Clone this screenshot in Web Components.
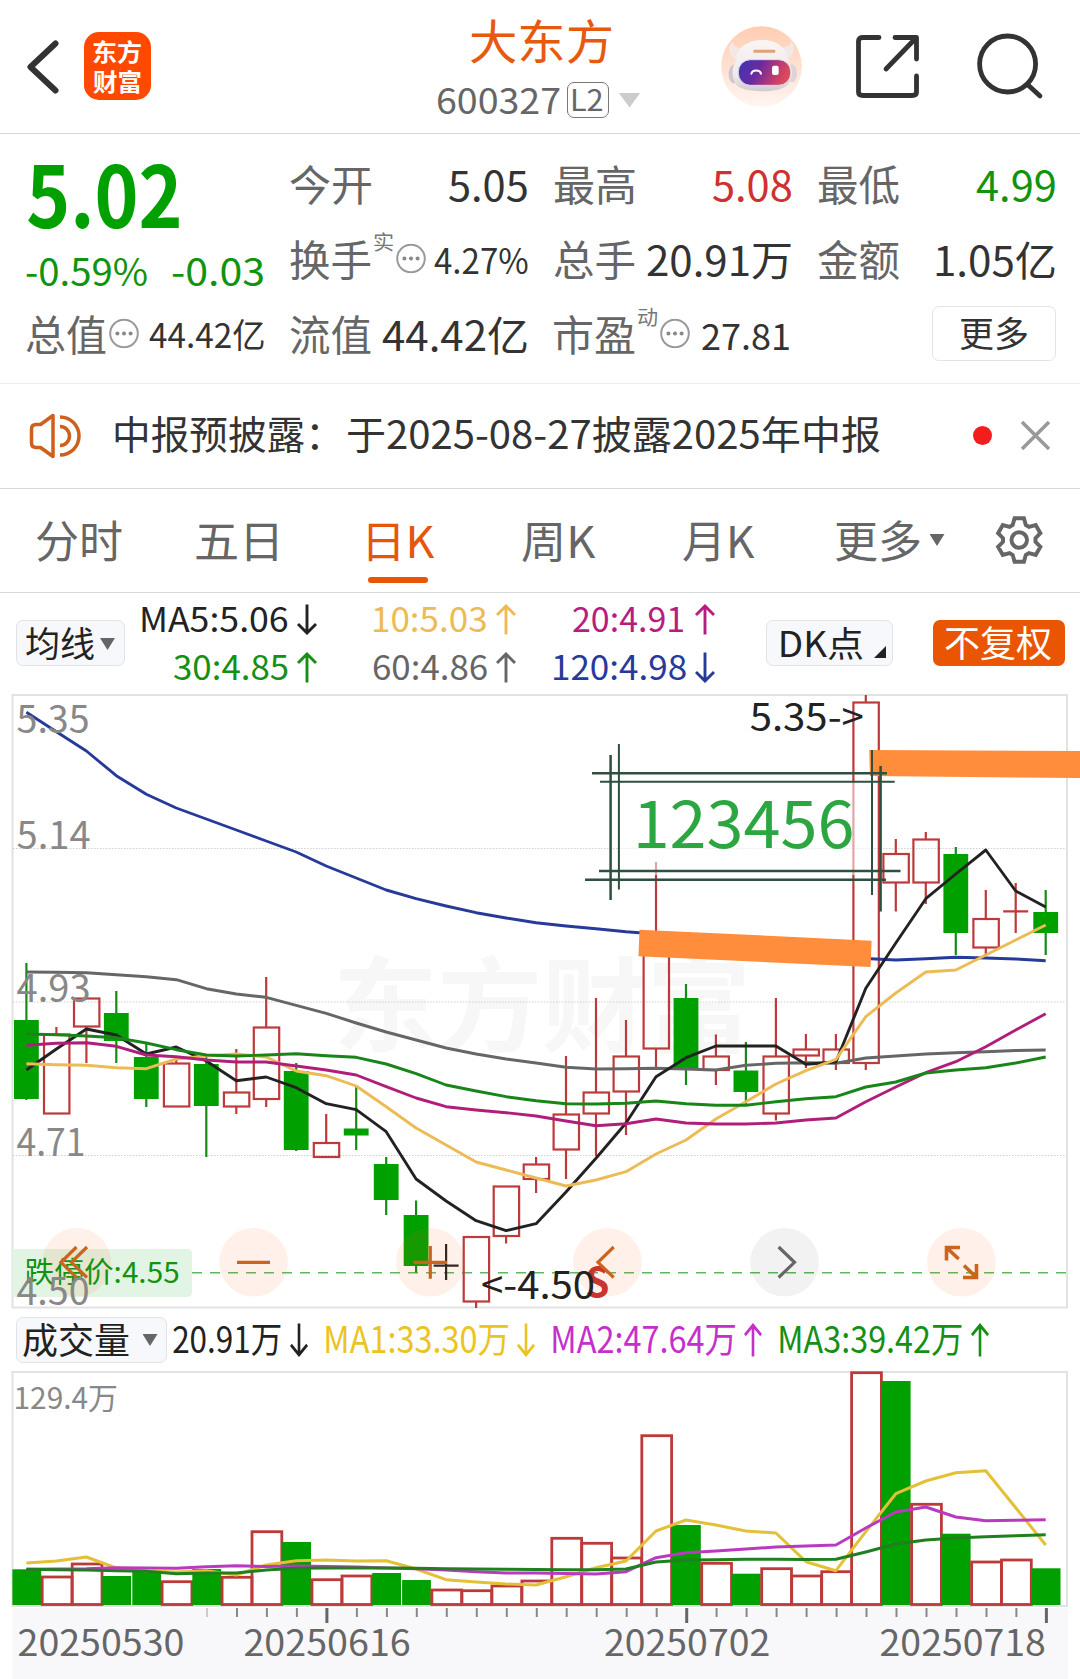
<!DOCTYPE html>
<html lang="zh-CN">
<head>
<meta charset="utf-8">
<title>大东方 600327</title>
<style>
  html, body {
    margin: 0;
    background: #fff;
  }
  body {
    width: 1080px;
    height: 1679px;
    overflow: hidden;
    font-family: "Noto Sans CJK SC", sans-serif;
    color: #333;
  }
</style>
</head>
<body>
<stock-page></stock-page>

<script>
const FONT = '"Noto Sans CJK SC", sans-serif';
const pen = document.createElement('canvas').getContext('2d');

// scale and shift that make the drawn width of a text equal to `width`
function inkFit(text, size, weight, width) {
  pen.font = `${weight} ${size}px ${FONT}`;
  const m = pen.measureText(text);
  const scale = width / (m.actualBoundingBoxLeft + m.actualBoundingBoxRight);
  return { scale, shift: m.actualBoundingBoxLeft * scale };
}

function define(name, html, setup) {
  const template = document.createElement('template');
  template.innerHTML = html;
  customElements.define(name, class extends HTMLElement {
    constructor() {
      super();
      this.attachShadow({ mode: 'open' });
      this.shadowRoot.appendChild(template.content.cloneNode(true));
    }
    connectedCallback() {
      if (setup) setup(this, this.shadowRoot);
    }
  });
}

/* ---------- text of a fixed width ---------- */

define('fit-text', `
  <style>
    :host {
      display: block;
      flex: none;
      line-height: 1;
      white-space: nowrap;
    }
    span {
      display: block;
      width: max-content;
      transform-origin: 0 0;
    }
  </style>
  <span><slot></slot></span>
`, (host, root) => {
  const size = +host.getAttribute('size');
  const width = +host.getAttribute('width');
  const weight = host.getAttribute('weight') || 400;
  const { scale, shift } = inkFit(host.textContent, size, weight, width);
  host.style.cssText += `;width:${width}px;font-size:${size}px;font-weight:${weight}`;
  root.querySelector('span').style.transform = `translate(${shift}px, -.06em) scaleX(${scale})`;
});

/* ---------- small parts ---------- */

define('info-dot', `
  <style>
    :host { display: block; flex: none; width: 30px; height: 30px; }
    svg { display: block; }
  </style>
  <svg width="30" height="30" fill="none">
    <circle cx="15" cy="15" r="13.8" stroke="#999" stroke-width="2"/>
    <g fill="#888"><circle cx="8.4" cy="15" r="2"/><circle cx="15" cy="15" r="2"/><circle cx="21.6" cy="15" r="2"/></g>
  </svg>
`);

define('trend-arrow', `
  <style>
    :host { display: block; flex: none; width: 20px; height: 31px; }
    :host([down]) svg { transform: scaleY(-1); }
    svg { display: block; width: 100%; height: 100%; }
  </style>
  <svg viewBox="0 0 20 31" preserveAspectRatio="none" fill="none" stroke="currentColor" stroke-width="2.9"><path d="M10 30.5V2M1 11l9-9 9 9"/></svg>
`);

define('caret-down', `
  <style>
    :host {
      display: block;
      flex: none;
      width: 15px;
      height: 12px;
      background: currentColor;
      clip-path: polygon(0 0, 100% 0, 50% 100%);
    }
  </style>
`);

/* ---------- header ---------- */

define('stock-header', `
  <style>
    :host {
      display: flex;
      box-sizing: border-box;
      height: 134px;
      border-bottom: 1px solid #d6d6d6;
    }
    svg { display: block; flex: none; }
    .back { margin: 40px 0 0 26px; }
    .logo {
      display: flex;
      flex-direction: column;
      gap: 6px;
      box-sizing: border-box;
      width: 67px;
      height: 68px;
      margin: 32px 0 0 24.5px;
      padding: 8px 0 0 9px;
      border-radius: 15px;
      background: #ff4800;
      color: #fff;
    }
    .name { width: 204px; margin-left: 286px; }
    .name .title { margin: 18px 0 0 34px; color: #e6590f; }
    .code { display: flex; align-items: center; height: 36px; margin-top: 17px; color: #666; }
    .level {
      display: flex;
      align-items: center;
      justify-content: center;
      box-sizing: border-box;
      width: 42px;
      height: 36px;
      margin-left: 7px;
      border: 1.5px solid #777;
      border-radius: 7px;
    }
    caret-down { width: 22px; height: 15px; margin-left: 10px; color: #ccc; }
    .robot { margin: 26px 0 0 80px; }
    .share { margin: 33px 0 0 53px; }
    .search { margin: 32px 0 0 55px; }
  </style>
  <svg class="back" width="33" height="54" fill="none" stroke="#333" stroke-width="6" stroke-linecap="round" stroke-linejoin="round"><path d="M29.500 3.500 4.500 27l25 23.500"/></svg>
  <div class="logo">
    <fit-text size="24" weight="700" width="48">东方</fit-text>
    <fit-text size="24" weight="700" width="48">财富</fit-text>
  </div>
  <div class="name">
    <fit-text class="title" size="47" width="140">大东方</fit-text>
    <div class="code">
      <fit-text size="36" width="123">600327</fit-text>
      <div class="level"><fit-text size="30" width="30">L2</fit-text></div>
      <caret-down></caret-down>
    </div>
  </div>
  <svg class="robot" width="81" height="81" viewBox="59 32 243 243">
    <defs>
      <linearGradient id="bg" x1="0" y1="0" x2="0" y2="1"><stop offset="0" stop-color="#ffccb2"/><stop offset="1" stop-color="#fff6f1"/></linearGradient>
      <linearGradient id="visor" x1="0" y1="0" x2="1" y2=".25"><stop offset="0" stop-color="#3a35b5"/><stop offset=".45" stop-color="#6a2aa0"/><stop offset=".8" stop-color="#c03a70"/><stop offset="1" stop-color="#d94a5a"/></linearGradient>
      <linearGradient id="shell" x1="0" y1="0" x2="0" y2="1"><stop offset="0" stop-color="#fbf6f4"/><stop offset=".7" stop-color="#eee9eb"/><stop offset="1" stop-color="#cfcacf"/></linearGradient>
    </defs>
    <circle cx="180.500" cy="153.500" r="121" fill="url(#bg)"/>
    <path d="M93 80c-14 12-14 40 12 52l24-34c-16 2-32-2-36-18zM270 78c12 14 10 42-12 52l-22-34c18 2 32-2 34-18z" fill="#f2e9e7"/>
    <ellipse cx="97" cy="176" rx="15" ry="28" fill="#cfc7ca"/><ellipse cx="272" cy="174" rx="15" ry="27" fill="#dcd4d7"/>
    <path d="M102 142c2-42 34-68 80-68s76 24 80 66c14 18 12 52-2 68-24 26-132 26-154 2-16-18-16-50-4-68z" fill="url(#shell)"/>
    <rect x="111" y="133" width="157" height="77" rx="36" fill="url(#visor)" stroke="#e2dae6" stroke-width="3"/>
    <path d="M150 175c3-13 26-13 29 0" fill="none" stroke="#fff" stroke-width="6" stroke-linecap="round"/>
    <rect x="212" y="151" width="20" height="28" rx="6" fill="#fff"/>
    <rect x="156" y="103" width="66" height="9" rx="3" fill="#e0a078"/>
  </svg>
  <svg class="share" width="66" height="67" fill="none" stroke="#333" stroke-width="4.800" stroke-linecap="round" stroke-linejoin="round">
    <path d="M24 4.500H8q-4.500 0-4.500 3.500V59q0 3.500 4.500 3.500H57q4.500 0 4.500-3.500V43M40 4.500H61.500V26M60 6 31 36"/>
  </svg>
  <svg class="search" width="68" height="70" fill="none" stroke="#333" stroke-width="4.800" stroke-linecap="round">
    <circle cx="31.600" cy="32" r="28"/><path d="M51.500 52.500 64 64"/>
  </svg>
`);

/* ---------- quote ---------- */

define('quote-cell', `
  <style>
    :host { display: flex; align-items: center; height: 75px; color: #333; }
    .label { color: #666; }
    .tools { display: flex; align-items: center; gap: 3px; margin-left: 3px; color: #777; }
    .value { margin-left: auto; }
    ::slotted(.sup) { transform: translateY(-18px); }
    ::slotted(info-dot) { transform: translateY(-2.5px); }
  </style>
  <div class="label"><slot name="label"></slot></div>
  <div class="tools"><slot name="tools"></slot></div>
  <div class="value"><slot></slot></div>
`);

define('stock-quote', `
  <style>
    :host {
      display: grid;
      grid-template-columns: repeat(4, 237.5px);
      grid-auto-rows: 75px;
      column-gap: 26.5px;
      box-sizing: border-box;
      height: 250px;
      padding: 14px 0 0 25.5px;
      border-bottom: 1px solid #ececec;
    }
    .price { grid-row: span 2; color: #00a000; }
    .price .last { margin: 5px 0 0 2px; }
    .change { display: flex; justify-content: space-between; margin-top: 15px; color: #109410; }
    .more {
      display: flex;
      align-items: center;
      justify-content: center;
      justify-self: end;
      box-sizing: border-box;
      width: 124px;
      height: 55px;
      margin: 8px -1px 0 0;
      border: 1.5px solid #e4e4e4;
      border-radius: 7px;
    }
    .up { color: #d03030; }
    .down { color: #109410; }
  </style>
  <div class="price">
    <fit-text class="last" size="85" weight="700" width="151">5.02</fit-text>
    <div class="change">
      <fit-text size="37.500" width="121.500">-0.59%</fit-text>
      <fit-text size="37.500" width="91">-0.03</fit-text>
    </div>
  </div>
  <quote-cell><fit-text slot="label" size="42" width="81">今开</fit-text><fit-text size="41" width="78">5.05</fit-text></quote-cell>
  <quote-cell><fit-text slot="label" size="42" width="81">最高</fit-text><fit-text class="up" size="41" width="78">5.08</fit-text></quote-cell>
  <quote-cell><fit-text slot="label" size="42" width="81">最低</fit-text><fit-text class="down" size="41" width="79">4.99</fit-text></quote-cell>
  <quote-cell>
    <fit-text slot="label" size="42" width="81">换手</fit-text>
    <fit-text class="sup" slot="tools" size="20" width="19">实</fit-text><info-dot slot="tools"></info-dot>
    <fit-text size="35" width="93.500">4.27%</fit-text>
  </quote-cell>
  <quote-cell><fit-text slot="label" size="42" width="81">总手</fit-text><fit-text size="41" width="144">20.91万</fit-text></quote-cell>
  <quote-cell><fit-text slot="label" size="42" width="81">金额</fit-text><fit-text size="41" width="119">1.05亿</fit-text></quote-cell>
  <quote-cell>
    <fit-text slot="label" size="42" width="80">总值</fit-text><info-dot slot="tools"></info-dot>
    <fit-text size="34" width="114.500">44.42亿</fit-text>
  </quote-cell>
  <quote-cell><fit-text slot="label" size="42" width="81">流值</fit-text><fit-text size="41" width="145">44.42亿</fit-text></quote-cell>
  <quote-cell>
    <fit-text slot="label" size="42" width="81">市盈</fit-text>
    <fit-text class="sup" slot="tools" size="20" width="19">动</fit-text><info-dot slot="tools"></info-dot>
    <fit-text size="36" width="87" style="margin-right:2px">27.81</fit-text>
  </quote-cell>
  <div class="more"><fit-text size="35" width="68">更多</fit-text></div>
`);

/* ---------- notice ---------- */

define('stock-notice', `
  <style>
    :host {
      display: flex;
      align-items: center;
      box-sizing: border-box;
      height: 105px;
      padding: 0 30px 1px 28px;
      border-bottom: 1px solid #d4d8d8;
    }
    svg { display: block; flex: none; }
    .msg { display: flex; gap: 30px; margin: 0 auto 2px 33px; }
    .dot { width: 19px; height: 19px; border-radius: 50%; background: #f21d1d; }
    .close { margin-left: 29px; }
  </style>
  <svg width="54" height="48" fill="none" stroke="#cf5f1c" stroke-width="3.500" stroke-linejoin="round">
    <path d="M25 3.500V44.500L12.500 35.500H8Q3.500 35.500 3.500 31V17Q3.500 12.500 8 12.500H12.500Z"/>
    <path d="M32 5a19 19 0 0 1 0 38M32 14.500a9.500 9.500 0 0 1 0 19"/>
  </svg>
  <div class="msg"><fit-text size="39" width="203">中报预披露：</fit-text><fit-text size="39" width="532">于2025-08-27披露2025年中报</fit-text></div>
  <div class="dot"></div>
  <svg class="close" width="29" height="29" fill="none" stroke="#999" stroke-width="3.500"><path d="M1 1 28 28M28 1 1 28"/></svg>
`);

/* ---------- period tabs ---------- */

define('period-tabs', `
  <style>
    :host {
      display: flex;
      align-items: center;
      box-sizing: border-box;
      height: 104px;
      padding: 2px 36px 0;
      border-bottom: 1px solid #d4d8d8;
      color: #666;
    }
    .tab { position: relative; display: flex; align-items: center; }
    .tab.on { color: #e6560a; }
    .tab.on::after {
      content: "";
      position: absolute;
      left: 0;
      bottom: -19px;
      width: 60px;
      height: 6px;
      border-radius: 3px;
      background: #ea5504;
    }
    fit-text { margin-top: 1px; }
    caret-down { margin: -3px 0 0 10px; }
    svg { display: block; margin: -3px 0 0 49px; }
  </style>
  <div class="tab"><fit-text size="44" width="86">分时</fit-text></div>
  <div class="tab" style="margin-left:73.500px"><fit-text size="44" width="81">五日</fit-text></div>
  <div class="tab on" style="margin-left:91.500px"><fit-text size="44" width="67">日K</fit-text></div>
  <div class="tab" style="margin-left:86.500px"><fit-text size="44" width="74">周K</fit-text></div>
  <div class="tab" style="margin-left:87px"><fit-text size="44" width="72">月K</fit-text></div>
  <div class="tab" style="margin-left:81px"><fit-text size="44" width="84">更多</fit-text><caret-down></caret-down></div>
  <svg width="54" height="54" viewBox="-27 -27 54 54" fill="none" stroke="#666" stroke-width="4.200"><path/><circle r="8.300"/></svg>
`, (host, root) => {
  // one tooth, turned six times
  const tooth = [[-7, -16], [-5, -23.2], [5, -23.2], [7, -16]];
  const points = [];
  for (let i = 0; i < 6; i++) {
    const a = i * Math.PI / 3;
    tooth.forEach(([x, y]) => points.push(
      (x * Math.cos(a) - y * Math.sin(a)).toFixed(2) + ' ' + (x * Math.sin(a) + y * Math.cos(a)).toFixed(2)));
  }
  root.querySelector('path').setAttribute('d', 'M' + points.join('L') + 'Z');
});

/* ---------- averages above the chart ---------- */

define('ma-value', `
  <style>
    :host { display: flex; align-items: center; justify-content: flex-end; gap: 9px; height: 48px; }
  </style>
  <slot></slot>
`);

define('ma-bar', `
  <style>
    :host { display: flex; height: 101px; padding-left: 16px; color: #222; }
    .button {
      display: flex;
      align-items: center;
      box-sizing: border-box;
      height: 46px;
      margin-top: 27px;
      border: 1.5px solid #e1e3e6;
      border-radius: 7px;
      background: #f7f8fb;
    }
    .average { width: 108.500px; padding-left: 9px; }
    .average caret-down { margin: 2px 0 0 6px; color: #666; }
    .values { display: grid; grid-template-columns: 192px 199px 199.500px; height: 96px; margin-top: 2px; }
    .dk { width: 127px; margin-left: 51px; padding-left: 14px; }
    .dk i { width: 12px; height: 12px; margin: 18px 0 0 11px; background: #222; clip-path: polygon(100% 0, 100% 100%, 0 100%); }
    .adjust { width: 132px; margin-left: 39.500px; padding-left: 12.500px; border: 0; background: #ea5504; color: #fff; }
  </style>
  <div class="button average"><fit-text size="35" width="68">均线</fit-text><caret-down></caret-down></div>
  <div class="values">
    <ma-value><fit-text size="34.500" width="145.500">MA5:5.06</fit-text><trend-arrow down></trend-arrow></ma-value>
    <ma-value style="color:#edbb55"><fit-text size="34.500" width="112.500">10:5.03</fit-text><trend-arrow></trend-arrow></ma-value>
    <ma-value style="color:#b81c80"><fit-text size="34.500" width="110">20:4.91</fit-text><trend-arrow style="margin-left:3px"></trend-arrow></ma-value>
    <ma-value style="color:#159015"><fit-text size="34.500" width="114">30:4.85</fit-text><trend-arrow></trend-arrow></ma-value>
    <ma-value style="color:#666"><fit-text size="34.500" width="114">60:4.86</fit-text><trend-arrow></trend-arrow></ma-value>
    <ma-value style="color:#263a99"><fit-text size="34.500" width="132">120:4.98</fit-text><trend-arrow down></trend-arrow></ma-value>
  </div>
  <div class="button dk"><fit-text size="35" width="82">DK点</fit-text><i></i></div>
  <div class="button adjust"><fit-text size="36" width="106">不复权</fit-text></div>
`);

/* ---------- volume header ---------- */

define('volume-bar', `
  <style>
    :host { display: flex; align-items: center; height: 62px; padding-left: 16px; color: #222; }
    .button {
      display: flex;
      align-items: center;
      box-sizing: border-box;
      width: 151px;
      height: 46px;
      padding-left: 5.500px;
      border: 1.5px solid #e1e3e6;
      border-radius: 7px;
      background: #f7f8fb;
    }
    .button caret-down { margin-left: 14px; color: #666; }
    .value { display: flex; align-items: center; gap: 8.500px; margin-left: 17px; }
    trend-arrow { width: 18px; height: 34px; }
  </style>
  <div class="button"><fit-text size="36" width="106">成交量</fit-text><caret-down></caret-down></div>
  <div class="value" style="margin-left:6px"><fit-text size="36.500" width="108">20.91万</fit-text><trend-arrow down></trend-arrow></div>
  <div class="value" style="color:#ecc422;margin-left:18px"><fit-text size="36.500" width="182.500">MA1:33.30万</fit-text><trend-arrow down></trend-arrow></div>
  <div class="value" style="color:#c530cb;margin-left:18.500px"><fit-text size="36.500" width="182.500">MA2:47.64万</fit-text><trend-arrow></trend-arrow></div>
  <div class="value" style="color:#159015;margin-left:18px"><fit-text size="36.500" width="182">MA3:39.42万</fit-text><trend-arrow></trend-arrow></div>
`);

/* ---------- charts ---------- */

const RED = '#bd3a3a';
const GREEN = '#00a000';
const LEFT = 26.4;
const STEP = 29.98;
const cx = i => +(LEFT + i * STEP).toFixed(1);

// kind, wick top, body top, body bottom, wick bottom
const candles = [
  ['g', 963, 1020, 1099, 1100], ['r', 1027, 1034, 1114, 1114], ['r', 998, 998, 1027, 1063],
  ['g', 991, 1013, 1041, 1063], ['g', 1043, 1057, 1099, 1107], ['r', 1059, 1063, 1107, 1107],
  ['g', 1057, 1064, 1106, 1157], ['r', 1049, 1092, 1107, 1114], ['r', 977, 1027, 1099.5, 1107],
  ['g', 1063, 1071, 1150, 1151], ['r', 1114, 1142.5, 1157.5, 1157], ['g', 1087, 1128.5, 1135.5, 1150],
  ['g', 1157, 1164, 1200, 1215], ['g', 1200.5, 1215, 1266, 1272.5], ['k', 1244, 1265.7, 1265.7, 1280],
  ['r', 1236, 1236.5, 1302, 1308], ['r', 1186, 1186, 1236.5, 1243.5], ['r', 1157, 1164, 1179.5, 1193],
  ['r', 1056, 1114, 1150, 1179], ['r', 998, 1092, 1114, 1156], ['r', 1020, 1056, 1092, 1135],
  ['r', 862, 947, 1049, 1070], ['g', 984, 998, 1069, 1085], ['r', 1034.5, 1056, 1070.5, 1085],
  ['g', 1042, 1070.5, 1092, 1104], ['r', 998, 1056, 1114, 1120.5], ['r', 1034, 1049, 1056, 1068],
  ['r', 1034, 1049, 1063.5, 1070], ['r', 695, 702, 1063.5, 1070], ['r', 839, 853.5, 883, 911.5],
  ['r', 832, 839, 883, 904], ['g', 847, 854, 933, 955], ['r', 890, 918.5, 948, 955],
  ['x', 883, 911.3, 911.3, 933], ['g', 890, 912, 933, 955]
];

const priceLines = [
  ['#263a99', [712.3, 731.7, 751, 775.7, 794.3, 808, 819, 830, 841, 852, 866, 878, 890, 898.7, 906, 912.7, 918, 922.7, 926, 928.7, 931.7, 934, 937, 941, 945, 949, 953, 956, 958.5, 960, 958.7, 957.3, 958, 959, 960.7]],
  ['#666', [972, 972.3, 972.7, 974.7, 976.7, 979.7, 988.7, 994, 997.3, 1005.3, 1013.3, 1023, 1032, 1040, 1048, 1054, 1059, 1063, 1067.3, 1069, 1068.7, 1068.3, 1069, 1070, 1065.3, 1063.3, 1062.7, 1063.3, 1058, 1056, 1054, 1052.7, 1051.7, 1050.5, 1050]],
  ['#222', [1070, 1049, 1029, 1035, 1054, 1047, 1061, 1080.7, 1077, 1087.7, 1103.7, 1109.7, 1131.7, 1179, 1201, 1220.7, 1230.7, 1223.7, 1192, 1158.3, 1123, 1076.7, 1057.7, 1046, 1046, 1046, 1064.3, 1062, 988.3, 943, 898.7, 874, 850, 891, 907]],
  ['#ecbb55', [1063.7, 1064.7, 1065.3, 1067.7, 1068.7, 1059, 1056, 1054, 1057, 1071, 1075.7, 1086, 1106.7, 1128, 1145, 1162, 1170, 1178, 1186, 1180, 1171.7, 1154, 1140, 1119, 1101.7, 1084, 1070.7, 1059.3, 1016.7, 993, 972, 970, 955, 940, 925]],
  ['#b01e7a', [1045.3, 1043.3, 1042.7, 1046.3, 1055, 1056.7, 1060, 1062, 1062, 1066, 1070, 1075, 1086.7, 1098, 1106.7, 1110, 1112.7, 1116, 1121, 1125.7, 1123.7, 1119, 1123, 1124, 1124, 1123, 1120, 1118, 1101.7, 1087, 1072.7, 1061.7, 1046.7, 1030, 1013.7]],
  ['#178517', [1034, 1034.7, 1036, 1037.7, 1043, 1049.7, 1055, 1056, 1055, 1053.7, 1055.7, 1057.3, 1064, 1073.7, 1085, 1091, 1096.7, 1100.7, 1103.7, 1104, 1103.3, 1101, 1103.7, 1105.3, 1105.3, 1101.7, 1098.7, 1096.7, 1087, 1082, 1073, 1070, 1067.7, 1063, 1057]]
];

const volumes = [
  ['g', 1569.3], ['r', 1577], ['r', 1564], ['g', 1576], ['g', 1570.3], ['r', 1581.7], ['g', 1569],
  ['r', 1577.3], ['r', 1531.7], ['g', 1542], ['r', 1579.7], ['r', 1576], ['g', 1573], ['g', 1580],
  ['r', 1590], ['r', 1590.7], ['r', 1586], ['r', 1581], ['r', 1538.3], ['r', 1543.3], ['r', 1558],
  ['r', 1435.7], ['g', 1525], ['r', 1563.3], ['g', 1573.7], ['r', 1568.7], ['r', 1576], ['r', 1571.7],
  ['r', 1372.7], ['g', 1381], ['r', 1504.3], ['g', 1533.7], ['r', 1562], ['r', 1560], ['g', 1568.3]
];

const volumeLines = [
  ['#e3c035', [1563, 1561, 1557, 1568, 1571, 1572, 1570.7, 1575, 1565, 1560.7, 1560, 1561, 1560.7, 1569, 1579.7, 1582, 1584, 1585, 1576.7, 1567.7, 1561, 1531, 1520, 1525, 1531, 1533, 1561.7, 1570.7, 1531.7, 1493.7, 1481, 1472.7, 1470.7, 1507.7, 1545]],
  ['#b93abf', [1569.3, 1569, 1568.7, 1567.7, 1568, 1568.3, 1566.7, 1565.7, 1566.5, 1566, 1566.5, 1567, 1568, 1568.7, 1570, 1571.7, 1573, 1573, 1573.5, 1574, 1571.7, 1557.7, 1552.7, 1551, 1549, 1547, 1546, 1545, 1528, 1512, 1507, 1517, 1520.7, 1520.3, 1519.7]],
  ['#1f801f', [1569.3, 1569.7, 1570, 1570.7, 1571.3, 1573.7, 1573, 1573, 1570, 1568.3, 1568, 1568, 1568, 1568.3, 1568.7, 1569, 1569.3, 1569.5, 1569.7, 1569.7, 1569, 1562, 1560, 1559.7, 1559.3, 1559.3, 1559.5, 1559.3, 1552, 1544, 1540, 1538, 1536.7, 1535.7, 1534.7]]
];

function label(text, x, y, size, width, color, weight = 400) {
  const { scale, shift } = inkFit(text, size, weight, width);
  return `<text transform="translate(${x + shift} ${y}) scale(${scale} 1)" font-size="${size}" font-weight="${weight}" fill="${color}">${text.replace(/</g, '&lt;').replace(/>/g, '&gt;')}</text>`;
}

function polyline([color, ys], width) {
  return `<polyline points="${ys.map((y, i) => cx(i) + ',' + y).join(' ')}" fill="none" stroke="${color}" stroke-width="${width}" stroke-linejoin="round"/>`;
}

function candle([kind, high, top, bottom, low], i) {
  const x = cx(i);
  if (kind === 'k' || kind === 'x') {
    return `<path d="M${x} ${high}V${low}M${x - 12.5} ${top}H${x + 12.5}" stroke="${kind === 'k' ? '#222' : RED}" stroke-width="2.2"/>`;
  }
  if (kind === 'g') {
    return `<path d="M${x} ${high}V${low}" stroke="#168a16" stroke-width="2.2"/><rect x="${x - 12.4}" y="${top}" width="24.8" height="${bottom - top}" fill="${GREEN}"/>`;
  }
  return `<g fill="none" stroke="${RED}" stroke-width="2.2"><path d="M${x} ${high}V${top}M${x} ${bottom}V${low}"/><rect x="${x - 12.4}" y="${top + .5}" width="25.4" height="${bottom - top - 1}"/></g>`;
}

define('price-chart', `
  <style>
    :host { display: block; height: 615px; }
    svg { display: block; }
  </style>
  <svg width="1080" height="615" viewBox="0 694 1080 615" font-family='${FONT}'></svg>
`, (host, root) => {
  const circles = [76.8, 253.6, 430.3, 607.5, 784.5, 961.5];
  root.querySelector('svg').innerHTML = [
    label('东方财富', 338, 1044, 103, 406, '#f7f7f7', 700),
    '<rect x="12.500" y="695" width="1054.500" height="612.500" fill="none" stroke="#e2e2e2" stroke-width="2"/>',
    '<path d="M13 848.500H1066M13 1002H1066M13 1155.500H1066" stroke="#d0d0d0" stroke-width="1" stroke-dasharray="1.500 1.500"/>',
    '<path d="M12.500 1249H187q5 0 5 5V1292q0 5-5 5H12.500Z" fill="#e2f4e3"/>',
    '<path d="M192 1272.700H1066" stroke="#5fb85f" stroke-width="1.600" stroke-dasharray="10 8"/>',
    ...candles.map(candle),
    ...priceLines.map(l => polyline(l, 2.9)),
    ...circles.map((x, i) => `<circle cx="${x}" cy="1262.300" r="34.300" fill="${i === 4 ? '#000' : '#ff5a14'}" opacity="${i === 4 ? .05 : .09}"/>`),
    label('跌停价:4.55', 25.5, 1283, 29, 153, '#129412'),
    label('5.35', 17.5, 732.5, 38, 71, '#888'),
    label('5.14', 17.5, 848.5, 38, 72, '#888'),
    label('4.93', 16.5, 1001.5, 38, 72, '#888'),
    label('4.71', 16.5, 1155.5, 38, 67, '#888'),
    label('4.50', 16.5, 1304.5, 38, 72, '#888'),
    label('5.35->', 750.7, 730.5, 38, 112, '#222'),
    label('S', 586.5, 1296.5, 40, 22, '#c8352c', 700),
    label('<-4.50', 482, 1299, 38, 112, '#222'),
    // control icons
    '<g fill="none" stroke="#cc641e" stroke-width="3.200">',
    '<path d="M76.500 1247 61 1262.300 76.500 1277.500M87 1247 71.500 1262.300 87 1277.500"/>',
    '<path d="M237 1262.300H270M413.600 1262.300H447M430.300 1246V1278.700"/>',
    '<path d="M613.700 1247 598 1262.300 613.700 1277.500"/>',
    '<path d="M778.600 1247 794.500 1262.300 778.600 1277.500" stroke="#666"/>',
    '<path d="M960 1247.500H946.500V1260.500M946.500 1247.500 958.700 1259M963 1277.500H976.500V1264M976.500 1277.500 964 1265.500" stroke-width="3.600"/>',
    '</g>',
    // marks drawn on top of the chart
    '<rect x="619" y="782" width="253" height="93" fill="#fff" opacity=".55"/>',
    '<path d="M639.500 929.700 871.600 940.700 870.600 967 638.500 956.300Z M869.200 750 1080 751V778L870 776Z" fill="#ff8d3b"/>',
    '<path d="M592 773.300H887M599 871H900.500M585 879.700H886M610.600 755V900M880.600 766V911.500" stroke="#2f4f3f" stroke-width="2.500"/>',
    '<path d="M600 781.700H894.700M618.900 744V889.500M872 750V895" stroke="#2f4f3f" stroke-width="2"/>',
    label('123456', 637.8, 847.5, 64.5, 213.8, '#2ca640')
  ].join('');
});

define('volume-chart', `
  <style>
    :host { display: block; height: 308px; }
    svg { display: block; }
  </style>
  <svg width="1080" height="308" viewBox="0 1371 1080 308" font-family='${FONT}'></svg>
`, (host, root) => {
  const bar = ([kind, top], i) => kind === 'g'
    ? `<rect x="${cx(i) - 14}" y="${top}" width="28.800" height="${1605 - top}" fill="${GREEN}"/>`
    : `<rect x="${cx(i) - 14.2}" y="${top}" width="29.800" height="${1604.5 - top}" fill="none" stroke="${RED}" stroke-width="2.800"/>`;
  const ticks = [];
  for (let i = 6; i < 35; i++) {
    const major = i === 10 || i === 22 || i === 34;
    ticks.push(`<path d="M${cx(i) + .7} 1608V${major ? 1623 : 1617}" stroke="${i === 6 ? '#ccc' : major ? '#666' : '#888'}" stroke-width="${major ? 3 : 2}"/>`);
  }
  root.querySelector('svg').innerHTML = [
    '<rect x="12.500" y="1608" width="1055.500" height="71" fill="#f8f8fb"/>',
    '<rect x="12.500" y="1372" width="1054.500" height="234" fill="none" stroke="#e2e2e2" stroke-width="2"/>',
    label('129.4万', 15.5, 1409, 30, 101.5, '#888'),
    ...volumes.map(bar),
    ...volumeLines.map(l => polyline(l, 3)),
    ...ticks,
    label('20250530', 18.6, 1655.5, 36.5, 164.5, '#666'),
    label('20250616', 244.5, 1655.5, 36.5, 165, '#666'),
    label('20250702', 605, 1655.5, 36.5, 164, '#666'),
    label('20250718', 880.6, 1655.5, 36.5, 164, '#666')
  ].join('');
});

/* ---------- page ---------- */

define('stock-page', `
  <style>
    :host { display: block; width: 1080px; }
  </style>
  <stock-header></stock-header>
  <stock-quote></stock-quote>
  <stock-notice></stock-notice>
  <period-tabs></period-tabs>
  <ma-bar></ma-bar>
  <price-chart></price-chart>
  <volume-bar></volume-bar>
  <volume-chart></volume-chart>
`);
</script>
</body>
</html>
